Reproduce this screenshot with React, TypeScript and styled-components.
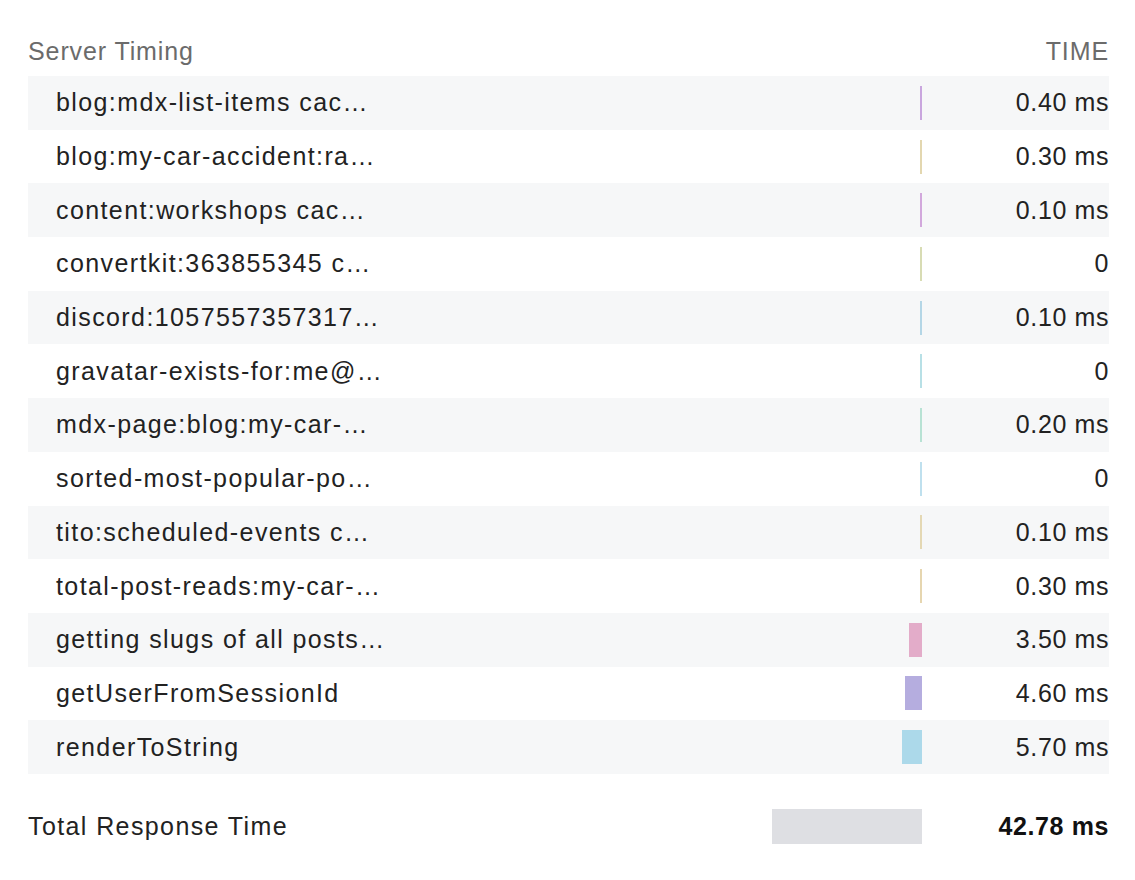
import React from "react";
import styled, { createGlobalStyle } from "styled-components";

const Global = createGlobalStyle`
  body { margin: 0; background: #fff; font-family: "Liberation Sans", Arial, sans-serif; }
`;

const Wrap = styled.div`
  padding: 27px 26px 0 28px;
  width: 1081px;
`;
const Header = styled.div`
  display: flex;
  justify-content: space-between;
  align-items: center;
  height: 49px;
  color: #6b6b6b;
  font-size: 25px;
  letter-spacing: 0.9px;
`;
const Row = styled.div<{ $alt: boolean }>`
  display: flex;
  align-items: center;
  height: 53.7px;
  background: ${(p) => (p.$alt ? "#f6f7f8" : "#fff")};
  color: #222;
  font-size: 25px;
  letter-spacing: 1.4px;
`;
const Name = styled.div<{ $indent: boolean }>`
  flex: 1;
  padding-left: ${(p) => (p.$indent ? 28 : 0)}px;
  display: flex;
  align-items: center;
  justify-content: space-between;
  height: 100%;
`;
const Bar = styled.div<{ $color: string; $h: number }>`
  height: ${(p) => p.$h}px;
  background: ${(p) => p.$color};
`;
const Time = styled.div<{ $bold?: boolean }>`
  width: 187px;
  text-align: right;
  letter-spacing: 0.6px;
  font-weight: ${(p) => (p.$bold ? 700 : 400)};
  color: ${(p) => (p.$bold ? "#111" : "#222")};
`;
const Spacer = styled.div`
  height: 26px;
`;

const rows: [string, string, number, string][] = [
  ["blog:mdx-list-items cac…", "0.40 ms", 2, "#c9a6de"],
  ["blog:my-car-accident:ra…", "0.30 ms", 2, "#e3d7b0"],
  ["content:workshops cac…", "0.10 ms", 2, "#d2a8dc"],
  ["convertkit:363855345 c…", "0", 2, "#d8dcb4"],
  ["discord:1057557357317…", "0.10 ms", 2, "#b4d6e6"],
  ["gravatar-exists-for:me@…", "0", 2, "#b8e0e6"],
  ["mdx-page:blog:my-car-…", "0.20 ms", 2, "#b8e2d4"],
  ["sorted-most-popular-po…", "0", 2, "#bfe0ee"],
  ["tito:scheduled-events c…", "0.10 ms", 2, "#e4d8b4"],
  ["total-post-reads:my-car-…", "0.30 ms", 2, "#e6d6b0"],
  ["getting slugs of all posts…", "3.50 ms", 13, "#e3acc9"],
  ["getUserFromSessionId", "4.60 ms", 17, "#b5addf"],
  ["renderToString", "5.70 ms", 20, "#acd9ea"],
];

export default function App() {
  return (
    <>
      <Global />
      <Wrap>
        <Header>
          <span>Server Timing</span>
          <span>TIME</span>
        </Header>
        {rows.map(([n, t, w, c], i) => (
          <Row key={n} $alt={i % 2 === 0}>
            <Name $indent>
              <span>{n}</span>
              <Bar $color={c} $h={34} style={{ width: w }} />
            </Name>
            <Time>{t}</Time>
          </Row>
        ))}
        <Spacer />
        <Row $alt={false}>
          <Name $indent={false}>
            <span>Total Response Time</span>
            <Bar $color="#dedfe3" $h={35} style={{ width: 150 }} />
          </Name>
          <Time $bold>42.78 ms</Time>
        </Row>
      </Wrap>
    </>
  );
}
